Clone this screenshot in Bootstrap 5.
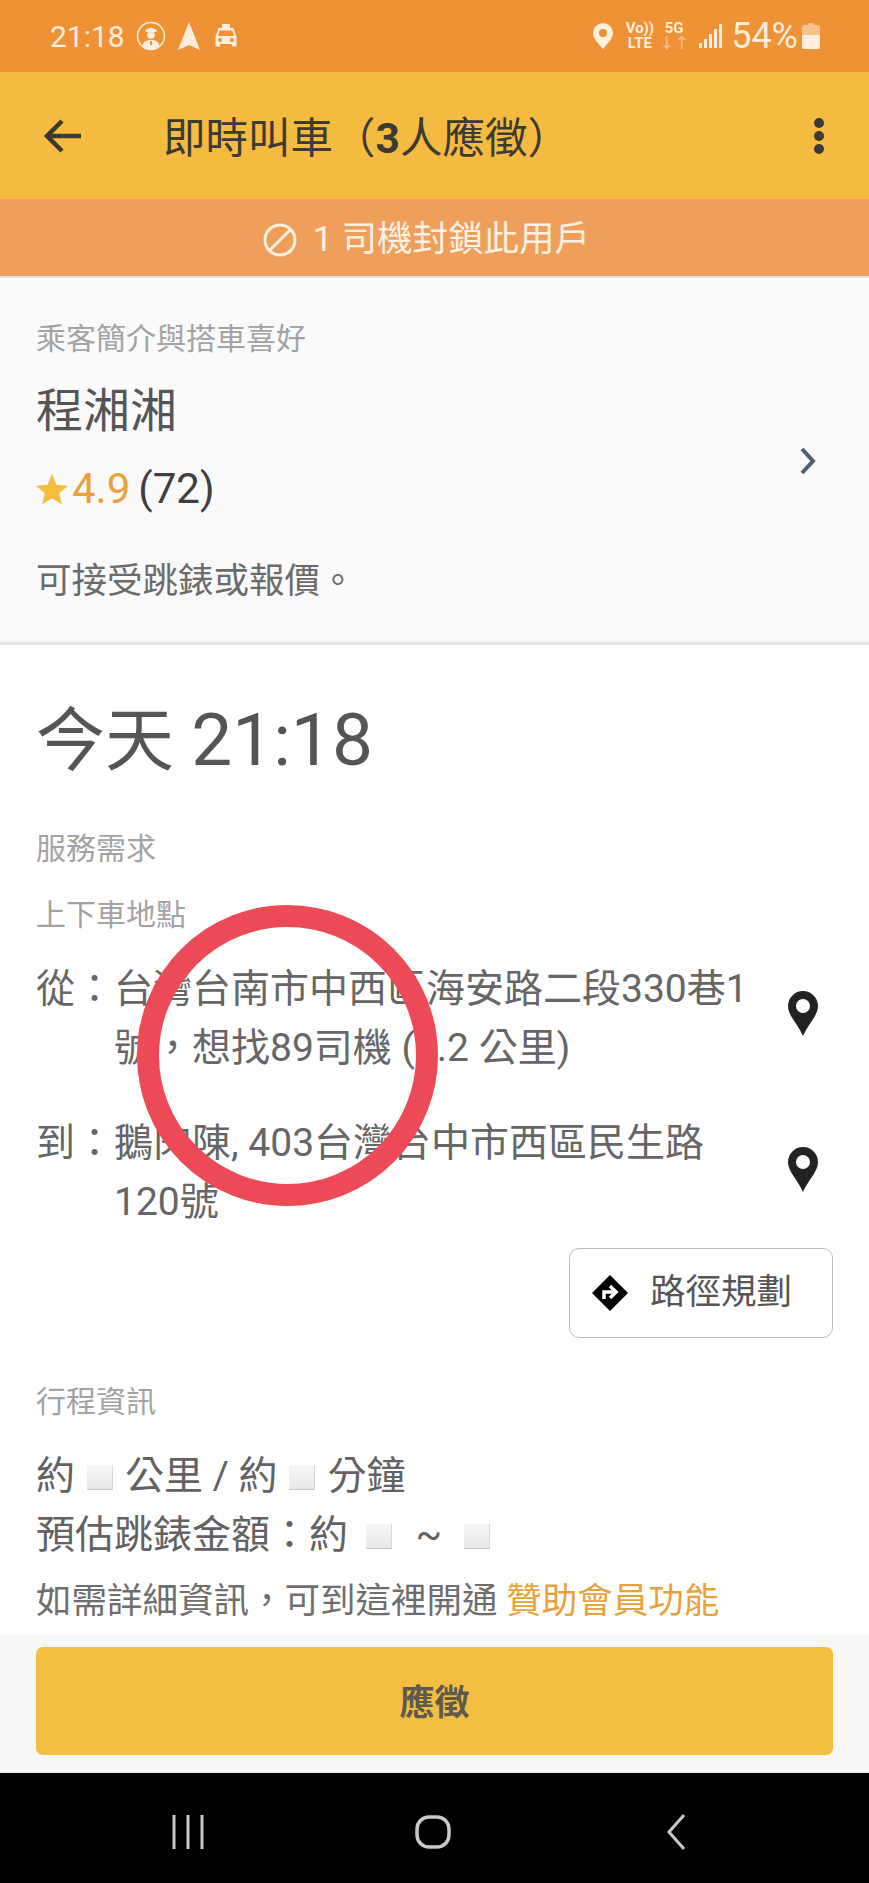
<!DOCTYPE html>
<html lang="zh-Hant">
  <head>
    <meta charset="UTF-8" />
    <meta name="viewport" content="width=device-width, initial-scale=1.0" />
    <title>即時叫車</title>
    <link rel="stylesheet" href="https://cdn.jsdelivr.net/npm/bootstrap@5.3.0/dist/css/bootstrap.min.css" />
    <style>
      body {
        font-family: Roboto, "Noto Sans CJK TC", sans-serif;
        background-color: #fff;
        color: #5c5c5c;
      }
      .phone-page { width: 869px; height: 1883px; }
      .status-bar { height: 72px; background-color: #ef9135; color: #fdeedd; padding: 0 49px 0 50px; font-size: 30px; }
      .status-gap { margin-left: 11px; }
      .status-tiny { font-size: 15px; font-weight: 700; line-height: 15px; text-align: center; }
      .status-pct { font-size: 36px; }
      .status-car { margin-left: 12px; }
      .status-volte { margin-left: 12px; }
      .status-net { margin-left: 5px; }
      .status-bars { margin-left: 10px; }
      .app-bar { height: 127px; background-color: #f4bb40; color: #3b3a33; padding: 0 44px 0 44px; }
      .app-title { font-size: 42.5px; margin-left: 81px; padding-top: 6px; white-space: nowrap; }
      .block-banner { height: 77px; background-color: #ef9f59; color: #fdf1e4; font-size: 35.5px; padding-top: 5px; padding-right: 16px; gap: 16px; }
      .profile-box { height: 369px; background-color: #fafafa; border-top: 2px solid #e4e4e4; border-bottom: 3px solid #e2e2e2; padding: 0 52px 0 36px; }
      .profile-info { padding-top: 41px; }
      .profile-arrow { margin-top: 2px; }
      .hint-text { font-size: 30px; line-height: 40px; color: #a3a3a3; }
      .name-text { font-size: 47px; line-height: 60px; margin-top: 22px; color: #555; }
      .rating-line { font-size: 42px; line-height: 50px; margin-top: 23px; color: #3f3f3f; }
      .rating-value { color: #e9a23b; }
      .note-text { font-size: 35.5px; line-height: 44px; margin-top: 45px; color: #6b6b6b; }
      .main-box { padding: 53px 36px 0; }
      .time-text { font-size: 69px; line-height: 84px; color: #555; }
      .time-digits { font-size: 73px; }
      .service-head { margin-top: 45px; }
      .place-head { margin-top: 26px; }
      .route-row { font-size: 39px; line-height: 59px; color: #666; }
      .route-first { margin-top: 25px; }
      .route-second { margin-top: 36px; }
      .route-label { width: 78px; flex: none; }
      .route-text { width: 646px; flex: none; }
      .route-pin { margin-left: 28px; margin-bottom: 8px; flex: none; }
      .route-first .route-pin { margin-bottom: 12px; }
      .route-btn { width: 264px; height: 90px; margin-top: 16px; border: 1px solid #bdbdbd; border-radius: 10px; color: #555; font-size: 35.5px; padding: 0 0 0 22px; background: #fff; }
      .route-btn-text { margin-left: 6px; }
      .trip-head { margin-top: 44px; }
      .trip-first { margin-top: 25px; }
      .trip-line { font-size: 39px; line-height: 59px; color: #626262; white-space: nowrap; }
      .blank-box { display: inline-block; width: 26px; height: 25px; margin: 0 12px; vertical-align: -1px; background: linear-gradient(#f7f7f7, #e8e8e8); border-bottom: 1px solid #c8c8c8; border-right: 1px solid #d8d8d8; }
      .blank-tight { margin: 0 8px; }
      .tilde-gap { margin: 0 4px 0 6px; }
      .sponsor-line { font-size: 35.5px; line-height: 44px; margin-top: 14px; color: #6e6e6e; white-space: nowrap; }
      .sponsor-link { color: #e6a33c; }
      .apply-bar { height: 139px; background-color: #f7f7f7; padding: 13px 36px 0; border-bottom: 1px solid #e8e8e8; }
      .apply-btn { height: 108px; padding-top: 12px; background-color: #f4bf41; border: 0; border-radius: 7px; color: #5f5a4c; font-size: 35px; font-weight: 700; }
      .nav-keys { height: 110px; background-color: #000; padding: 8px 183px 0 172px; }
      .home-key { margin-right: 5px; }
      .red-ring { left: 137px; top: 905px; width: 301px; height: 301px; border: 22px solid #ed4a57; }
    </style>
  </head>
  <body>
    <div class="phone-page d-flex flex-column position-relative overflow-hidden">
      <div class="status-bar d-flex align-items-center">
        <span>21:18</span>
        <svg class="status-gap" width="30" height="30" viewBox="0 0 30 30">
          <circle cx="15" cy="15" r="13.5" fill="none" stroke="#fdeedd" stroke-width="1.5" />
          <path d="M9 9l6-2.500 6 2.500-1 2h-10z" fill="#fdeedd" />
          <circle cx="15" cy="14" r="3.800" fill="#fdeedd" />
          <path d="M6.500 26c0-4.500 3-7 8.500-7s8.500 2.500 8.500 7a13 13 0 0 1-17 0z" fill="#fdeedd" />
          <path d="M14 20h2v4h-2z" fill="#ef9135" />
        </svg>
        <svg class="status-gap" width="24" height="30" viewBox="0 0 24 30"><path d="M12 1l11 28-11-5-11 5z" fill="#fdeedd" /></svg>
        <svg class="status-car" width="26" height="26" viewBox="0 0 24 26">
          <path d="M8 1h8v4h3.500l3 8.500v10h-4.500v-2.500h-12v2.500h-4.500v-10l3-8.500h3.500zM5.800 7.500l-1.800 5.500h16l-1.800-5.500z" fill="#fdeedd" fill-rule="evenodd" />
          <circle cx="6" cy="17" r="2" fill="#ef9135" /><circle cx="18" cy="17" r="2" fill="#ef9135" />
        </svg>
        <svg class="ms-auto" width="22" height="28" viewBox="0 0 22 28"><path d="M11 1a10 10 0 0 1 10 10c0 6-6 11-10 16-4-5-10-10-10-16a10 10 0 0 1 10-10zm0 6a4 4 0 1 0 0 8 4 4 0 0 0 0-8z" fill="#fdeedd" fill-rule="evenodd" /></svg>
        <div class="status-tiny status-volte">Vo))<br />LTE</div>
        <div class="status-tiny status-net">5G<br /><span class="opacity-50">↓↑</span></div>
        <svg class="status-bars" width="24" height="26" viewBox="0 0 24 26">
          <path d="M0 20h3v5h-3zM5 16h3v9h-3zM10 11h3v14h-3zM15 6h3v19h-3zM20 1h3v24h-3z" fill="#fdeedd" />
        </svg>
        <span class="status-pct ms-2">54%</span>
        <svg class="ms-1" width="18" height="28" viewBox="0 0 18 28">
          <path d="M6 1h6v2h4a2 2 0 0 1 2 2v8h-18v-8a2 2 0 0 1 2-2h4z" fill="#f7c08f" />
          <path d="M0 13h18v12a2 2 0 0 1-2 2h-14a2 2 0 0 1-2-2z" fill="#fdeedd" />
        </svg>
      </div>

      <nav class="navbar app-bar flex-nowrap justify-content-start">
        <svg width="38" height="36" viewBox="0 0 38 36"><path d="M37 18h-33M18 3l-15 15 15 15" fill="none" stroke="#3b3a33" stroke-width="4.500" /></svg>
        <span class="app-title">即時叫車（<b>3</b>人應徵）</span>
        <svg class="ms-auto" width="12" height="38" viewBox="0 0 12 38"><circle cx="6" cy="6" r="5" fill="#3b3a33" /><circle cx="6" cy="19" r="5" fill="#3b3a33" /><circle cx="6" cy="32" r="5" fill="#3b3a33" /></svg>
      </nav>

      <div class="block-banner d-flex align-items-center justify-content-center">
        <svg width="34" height="34" viewBox="0 0 34 34"><circle cx="17" cy="17" r="15" fill="none" stroke="#fdf1e4" stroke-width="3" /><path d="M7 27l20-20" stroke="#fdf1e4" stroke-width="3" /></svg>
        <span>1 司機封鎖此用戶</span>
      </div>

      <div class="profile-box d-flex justify-content-between align-items-center">
        <div class="profile-info align-self-start">
          <div class="hint-text">乘客簡介與搭車喜好</div>
          <div class="name-text">程湘湘</div>
          <div class="rating-line d-flex align-items-center">
            <svg class="me-1" width="32" height="30" viewBox="0 0 32 30"><path d="M16 0l4.500 10.800 11.500.900-8.800 7.500 2.700 11.100-9.900-6-9.900 6 2.700-11.100-8.800-7.500 11.500-.900z" fill="#f4bd3e" /></svg>
            <span class="rating-value">4.9</span><span class="ms-2">(72)</span>
          </div>
          <div class="note-text">可接受跳錶或報價。</div>
        </div>
        <svg class="profile-arrow" width="18" height="28" viewBox="0 0 18 28"><path d="M3 2l11 12-11 12" fill="none" stroke="#4f5f6f" stroke-width="4" /></svg>
      </div>

      <div class="main-box flex-grow-1">
        <div class="time-text">今天 <span class="time-digits">21:18</span></div>
        <div class="hint-text service-head">服務需求</div>
        <div class="hint-text place-head">上下車地點</div>
        <div class="route-row route-first d-flex align-items-center">
          <div class="route-label align-self-start">從：</div>
          <div class="route-text">台灣台南市中西區海安路二段330巷1號，想找89司機 (1.2 公里)</div>
          <svg class="route-pin" width="30" height="45" viewBox="0 0 30 45"><path d="M15 0a15 15 0 0 1 15 15c0 10-10 18-15 30-5-12-15-20-15-30a15 15 0 0 1 15-15zm0 8a7 7 0 1 0 0 14 7 7 0 0 0 0-14z" fill="#222" fill-rule="evenodd" /></svg>
        </div>
        <div class="route-row route-second d-flex align-items-center">
          <div class="route-label align-self-start">到：</div>
          <div class="route-text">鵝肉陳, 403台灣台中市西區民生路120號</div>
          <svg class="route-pin" width="30" height="45" viewBox="0 0 30 45"><path d="M15 0a15 15 0 0 1 15 15c0 10-10 18-15 30-5-12-15-20-15-30a15 15 0 0 1 15-15zm0 8a7 7 0 1 0 0 14 7 7 0 0 0 0-14z" fill="#222" fill-rule="evenodd" /></svg>
        </div>
        <div class="d-flex justify-content-end">
          <button type="button" class="btn route-btn d-flex align-items-center gap-3">
            <svg width="36" height="36" viewBox="0 0 36 36"><path d="M18 0l18 18-18 18-18-18z" fill="#000" /><path d="M12 24v-7h10M18 11l6 6-6 6" fill="none" stroke="#fff" stroke-width="3.500" /></svg>
            <span class="route-btn-text">路徑規劃</span>
          </button>
        </div>
        <div class="hint-text trip-head">行程資訊</div>
        <div class="trip-line trip-first">約<span class="blank-box"></span>公里 / 約<span class="blank-box"></span>分鐘</div>
        <div class="trip-line">預估跳錶金額：約 <span class="blank-box blank-tight"></span> <span class="tilde-gap">~</span> <span class="blank-box blank-tight"></span></div>
        <div class="sponsor-line">如需詳細資訊，可到這裡開通 <span class="sponsor-link">贊助會員功能</span></div>
      </div>

      <div class="apply-bar">
        <button type="button" class="btn apply-btn w-100">應徵</button>
      </div>

      <div class="nav-keys d-flex align-items-center justify-content-between">
        <svg width="32" height="34" viewBox="0 0 32 34"><path d="M2 0v34M16 0v34M30 0v34" stroke="#c9c9c9" stroke-width="3" /></svg>
        <svg class="home-key" width="36" height="34" viewBox="0 0 36 34"><rect x="2" y="2" width="32" height="30" rx="12" fill="none" stroke="#c9c9c9" stroke-width="3.500" /></svg>
        <svg width="20" height="36" viewBox="0 0 20 36"><path d="M18 1l-15 17 15 17" fill="none" stroke="#c9c9c9" stroke-width="3" /></svg>
      </div>

      <div class="red-ring position-absolute rounded-circle"></div>
    </div>
    <script src="https://cdn.jsdelivr.net/npm/bootstrap@5.3.0/dist/js/bootstrap.bundle.min.js"></script>
  </body>
</html>
